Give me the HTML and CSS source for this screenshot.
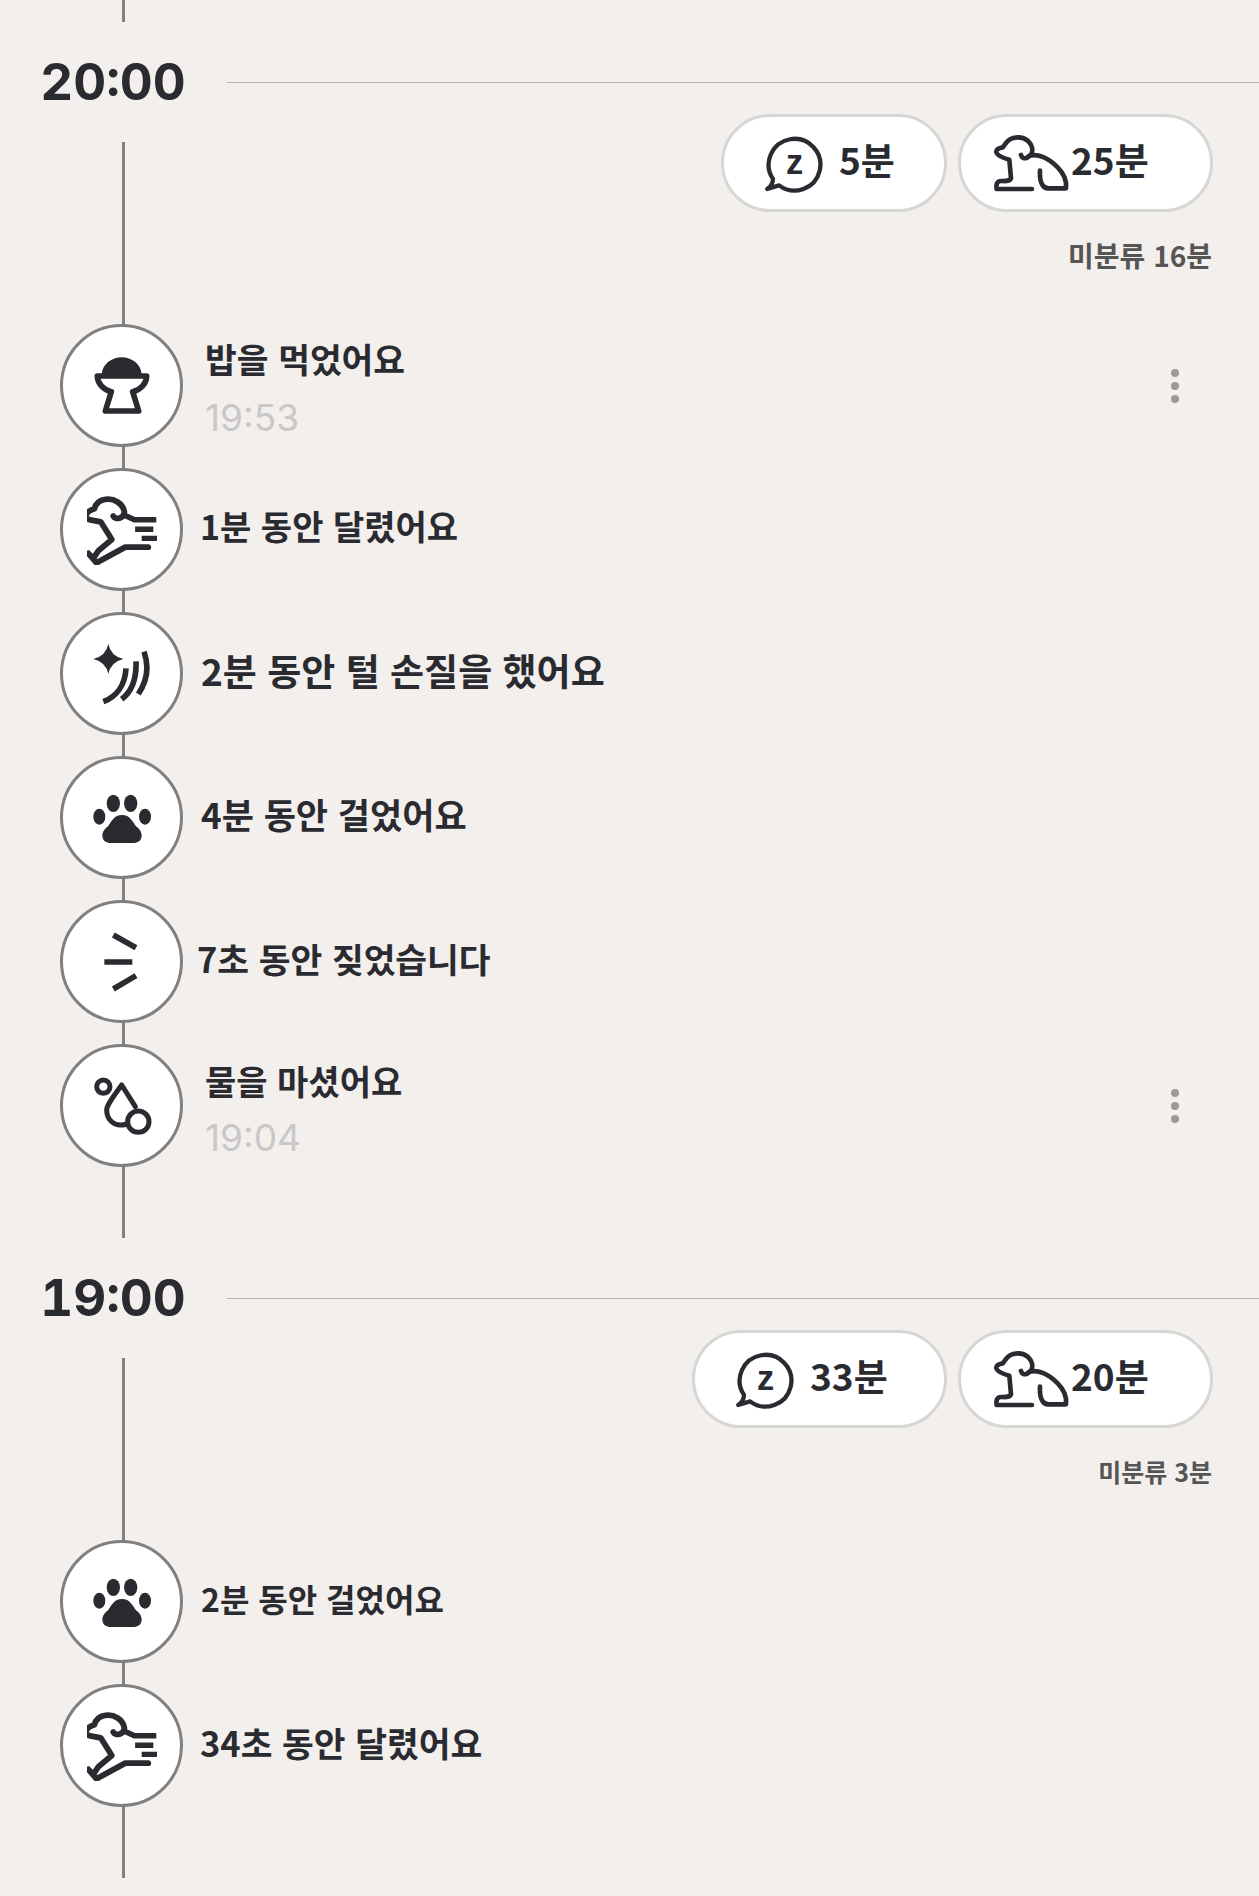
FILE: index.html
```html
<!DOCTYPE html>
<html lang="ko">
<head>
  <meta charset="UTF-8" />
  <meta name="viewport" content="width=device-width, initial-scale=1.0"/>
  <title>Timeline</title>
  <link rel="stylesheet" href="styles.css">
</head>
<body>
  <svg class="defs" width="0" height="0" aria-hidden="true">
    <symbol id="i-bubble" viewBox="180 130 170 170">
      <path class="ln" stroke-width="12" d="M205,258 A72,72 0 1 1 222,276 L189,286 Q205,275 205,258Z"/>
    </symbol>
    <symbol id="i-dog" viewBox="95 72 240 240">
      <path class="ln" stroke-width="14" d="M185,168 Q190,183 205,175 C222,165 225,145 205,125 C190,113 165,112 150,122 C140,128 135,140 130,145 C118,147 108,152 112,162 C116,172 135,178 150,182 L155,238 C150,248 140,246 125,246 C112,246 110,258 112,270 H218"/>
      <path class="ln" stroke-width="14" d="M207,172 C235,160 270,180 295,205 C315,225 322,250 320,268 H270 C250,270 240,250 242,215"/>
    </symbol>
    <symbol id="i-run" viewBox="60 54 192 192">
      <path class="ln" stroke-width="16" d="M132,112 C138,124 165,118 162,98 C158,78 135,62 110,66 C95,68 85,75 80,92 C68,96 58,104 56,112 C58,125 80,122 98,128 L128,176 L92,206 L78,226"/>
      <path class="ln" stroke-width="16" d="M64,214 L86,240 L165,197 H228"/>
      <path class="ln bt" stroke-width="15" d="M160,108 L190,122 H250 M192,148 H242 M210,173 H260"/>
    </symbol>
    <symbol id="i-paw" viewBox="150 555 192 192">
      <ellipse class="fl" cx="220" cy="607" rx="20" ry="26"/>
      <ellipse class="fl" cx="272" cy="607" rx="20" ry="26"/>
      <ellipse class="fl" cx="178" cy="647" rx="18" ry="24"/>
      <ellipse class="fl" cx="315" cy="647" rx="18" ry="24"/>
      <path class="fl" d="M246,642 C270,642 278,662 288,676 C300,685 306,695 305,705 C304,720 292,726 280,726 H212 C200,726 188,720 187,705 C186,695 192,685 204,676 C214,662 222,642 246,642Z"/>
    </symbol>
  </svg>

  <div class="spur"></div>

  <section>
    <header class="hour-head">
      <h2 class="hour">20:00</h2>
      <div class="rule"></div>
    </header>
    <div class="timeline">
      <div class="pills">
        <div class="pill pill-sleep w-226">
          <svg class="ico-sleep" viewBox="180 130 170 170">
            <use href="#i-bubble" x="180" y="130" width="170" height="170"/>
            <text x="265" y="243" text-anchor="middle" class="zzz">z</text>
          </svg><span>5분</span>
        </div>
        <div class="pill pill-awake">
          <svg class="ico-dog"><use href="#i-dog"/></svg><span>25분</span>
        </div>
      </div>
      <div class="other">미분류 16분</div>

      <div class="row">
        <div class="circle">
          <svg class="ico" viewBox="60 42 192 192">
            <path class="fl" d="M95,102 C98,72 125,52 155,52 S212,72 215,102Z"/>
            <path class="ln" stroke-width="17" d="M82,108 H230 C230,130 212,150 188,155 L206,213 H106 L124,155 C100,150 82,130 82,108Z"/>
          </svg>
        </div>
        <div class="text text-time">
          <div class="title">밥을 먹었어요</div>
          <div class="time">19:53</div>
        </div>
        <div class="kebab"><i></i><i></i><i></i></div>
      </div>

      <div class="row">
        <div class="circle"><svg class="ico ico-run"><use href="#i-run"/></svg></div>
        <div class="text text-near-2"><div class="title title-xs">1분 동안 달렸어요</div></div>
      </div>

      <div class="row">
        <div class="circle">
          <svg class="ico" viewBox="60 66 192 192">
            <path class="fl" d="M115,72 Q122,108 160,117 Q122,126 115,162 Q108,126 70,117 Q108,108 115,72Z"/>
            <path class="ln bt" stroke-width="17" d="M168,145 C165,195 140,230 100,245 M198,124 C200,175 185,215 155,238 M222,95 C238,140 230,185 205,222"/>
          </svg>
        </div>
        <div class="text"><div class="title title-lg">2분 동안 털 손질을 했어요</div></div>
      </div>

      <div class="row">
        <div class="circle"><svg class="ico"><use href="#i-paw"/></svg></div>
        <div class="text"><div class="title title-md">4분 동안 걸었어요</div></div>
      </div>

      <div class="row">
        <div class="circle">
          <svg class="ico" viewBox="60 75 192 192">
            <path class="ln bt" stroke-width="17" d="M130,90 L198,128 M103,171 H187 M130,252 L198,212"/>
          </svg>
        </div>
        <div class="text text-near"><div class="title">7초 동안 짖었습니다</div></div>
      </div>

      <div class="row">
        <div class="circle">
          <svg class="ico" viewBox="60 72 192 192">
            <circle class="ln" stroke-width="15" cx="100" cy="110" r="20"/>
            <path class="ln" stroke-width="15" d="M170,222 C130,235 110,205 110,180 C110,165 130,140 155,105 L196,170"/>
            <circle class="ln" stroke-width="15" cx="205" cy="215" r="32"/>
          </svg>
        </div>
        <div class="text text-time">
          <div class="title title-low">물을 마셨어요</div>
          <div class="time">19:04</div>
        </div>
        <div class="kebab"><i></i><i></i><i></i></div>
      </div>
    </div>
  </section>

  <section>
    <header class="hour-head">
      <h2 class="hour">19:00</h2>
      <div class="rule"></div>
    </header>
    <div class="timeline">
      <div class="pills">
        <div class="pill pill-sleep w-255">
          <svg class="ico-sleep" viewBox="180 130 170 170">
            <use href="#i-bubble" x="180" y="130" width="170" height="170"/>
            <text x="265" y="243" text-anchor="middle" class="zzz">z</text>
          </svg><span>33분</span>
        </div>
        <div class="pill pill-awake">
          <svg class="ico-dog"><use href="#i-dog"/></svg><span>20분</span>
        </div>
      </div>
      <div class="other other-sm">미분류 3분</div>

      <div class="row">
        <div class="circle"><svg class="ico"><use href="#i-paw"/></svg></div>
        <div class="text"><div class="title title-sm">2분 동안 걸었어요</div></div>
      </div>

      <div class="row">
        <div class="circle"><svg class="ico ico-run"><use href="#i-run"/></svg></div>
        <div class="text text-near-2"><div class="title">34초 동안 달렸어요</div></div>
      </div>
    </div>
  </section>
</body>
</html>
```

FILE: styles.css
```css
body {
  margin: 0;
  background-color: #f3efec;
  color: #2a2b30;
  font-family: "Noto Sans CJK KR", "Noto Sans", sans-serif;
}
.defs {
  position: absolute;
}
.ln {
  fill: none;
  stroke: #2a2b30;
  stroke-linecap: round;
  stroke-linejoin: round;
}
.bt {
  stroke-linecap: butt;
}
.fl {
  fill: #2a2b30;
}
.zzz {
  font-family: "Liberation Sans", sans-serif;
  font-weight: 700;
  font-size: 96px;
  fill: #2a2b30;
}
.spur {
  height: 22px;
  background: linear-gradient(#808080, #808080) 122px 0 / 3px 100% no-repeat;
}
.hour-head {
  display: flex;
  align-items: center;
  height: 60px;
  padding: 30px 0 2px 20px;
}
.hour {
  width: 186px;
  margin: 0;
  font-family: Inter, sans-serif;
  font-optical-sizing: none;
  font-variant-numeric: tabular-nums;
  font-size: 51px;
  font-weight: 700;
  line-height: 60px;
  text-align: center;
}
.rule {
  flex: 1;
  height: 1px;
  margin-left: 21px;
  background-color: #b8b4b0;
}
.timeline {
  padding-bottom: 71px;
  background: linear-gradient(#808080, #808080) 122px 28px / 3px calc(100% - 28px) no-repeat;
}
.pills {
  display: flex;
  justify-content: flex-end;
  gap: 11px;
  padding-right: 46px;
}
.pill {
  display: flex;
  align-items: center;
  box-sizing: border-box;
  height: 98px;
  border: 3px solid #d6d6d4;
  border-radius: 49px;
  background-color: #fff;
  font-size: 37px;
  font-weight: 700;
}
.pill span {
  position: relative;
  top: -4px;
}
.pill-sleep {
  gap: 14px;
  padding-left: 40px;
}
.w-226 { width: 226px; }
.w-255 { width: 255px; }
.pill-awake {
  width: 255px;
  padding-left: 30px;
}
.ico-sleep {
  width: 61px;
  height: 61px;
}
.ico-dog {
  width: 80px;
  height: 80px;
}
.other {
  margin: 23px 47px 49px 0;
  color: #555;
  font-size: 28px;
  font-weight: 700;
  line-height: 40px;
  text-align: right;
}
.other-sm {
  font-size: 25px;
}
.row {
  display: flex;
  align-items: center;
  margin: 0 80px 21px 60px;
}
.row:last-child {
  margin-bottom: 0;
}
.circle {
  display: flex;
  align-items: center;
  justify-content: center;
  box-sizing: border-box;
  flex: none;
  width: 123px;
  height: 123px;
  border: 3px solid #808080;
  border-radius: 50%;
  background-color: #fff;
}
.ico {
  width: 64px;
  height: 64px;
}
.ico-run {
  width: 70px;
  height: 70px;
}
.text {
  margin-left: 18px;
  padding-bottom: 8px;
}
.text-time {
  margin-left: 22px;
  padding: 2px 0 0;
}
.text-near {
  margin-left: 14px;
}
.text-near-2 {
  margin-left: 17px;
}
.title {
  font-size: 34.5px;
  font-weight: 700;
  line-height: 46px;
}
.title-lg { font-size: 37px; }
.title-md { font-size: 35px; }
.title-sm { font-size: 32px; }
.title-xs { font-size: 34px; }
.title-low {
  margin: 3px 0 -3px;
  font-size: 34px;
}
.time {
  margin-top: 17px;
  color: #c8c8c8;
  font-family: Inter, sans-serif;
  font-size: 37px;
  line-height: 40px;
}
.kebab {
  display: flex;
  flex-direction: column;
  gap: 5px;
  margin-left: auto;
}
.kebab i {
  display: block;
  width: 8px;
  height: 8px;
  border-radius: 50%;
  background-color: #9a9a9a;
}
```
